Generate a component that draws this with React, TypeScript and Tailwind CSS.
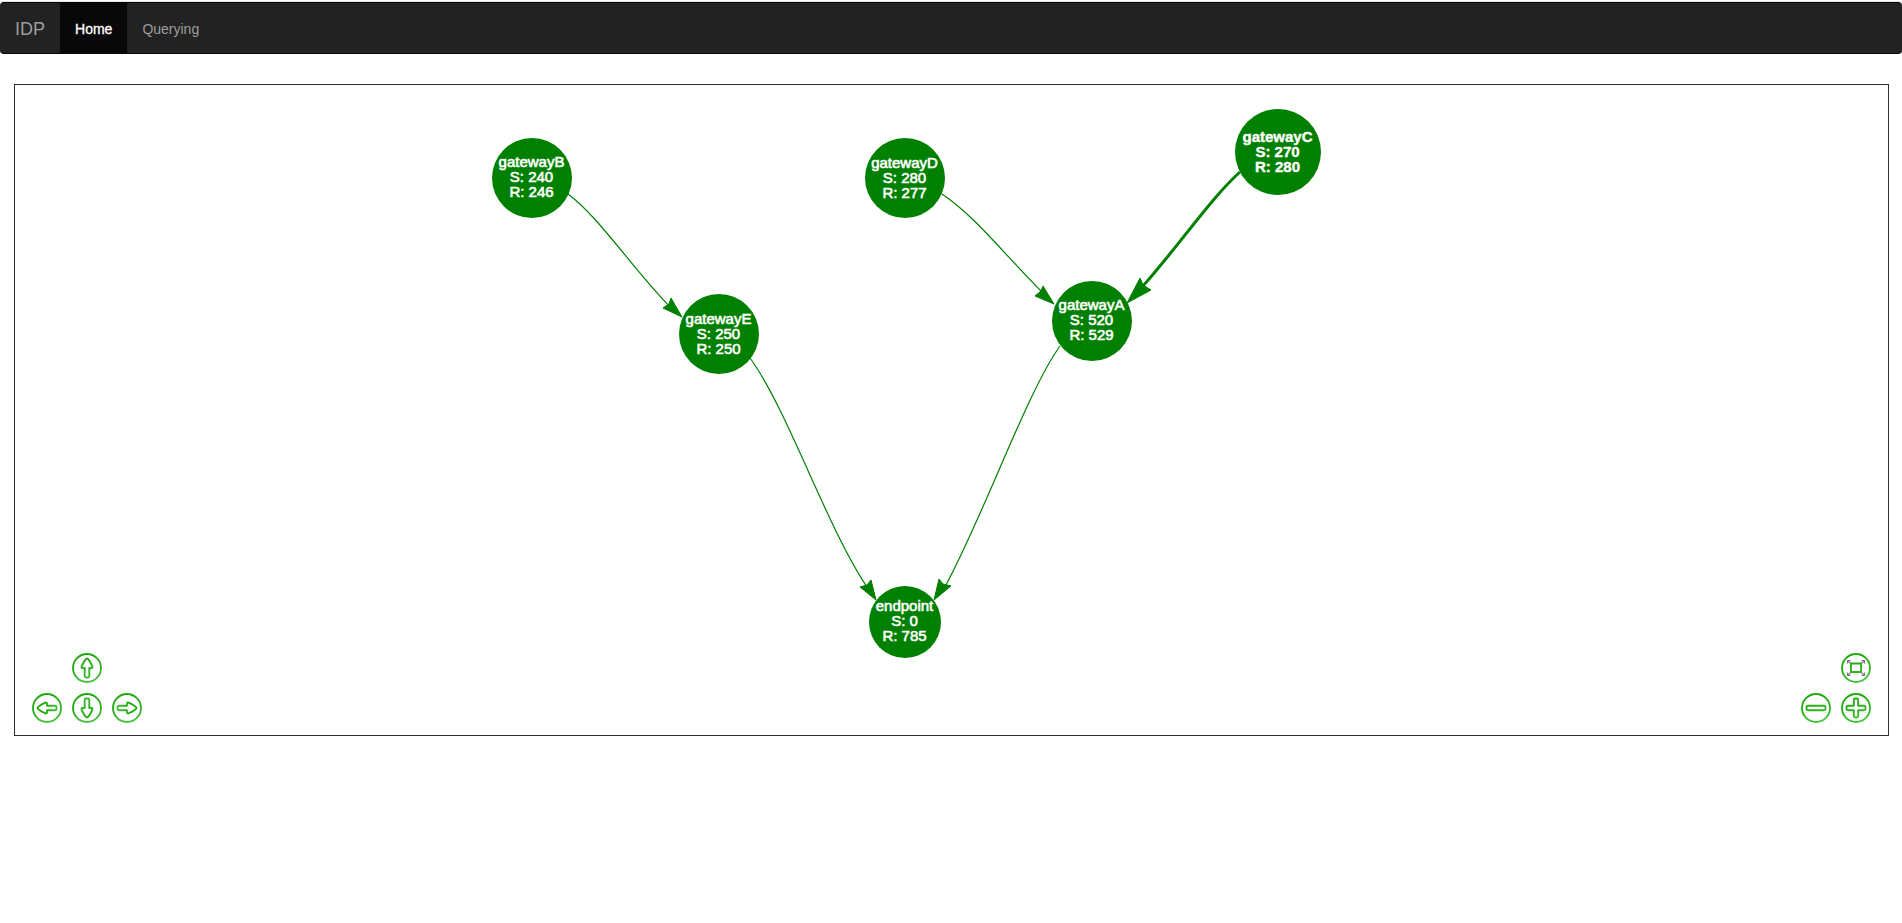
import React from "react";

type GraphNode = { id: string; sent: number; received: number; x: number; y: number; r: number; labelY: number; selected?: boolean };
type Edge = { id: string; d: string; head: string; width: number };

// Coordinates are relative to the centre line of the canvas.
const nodes: GraphNode[] = [
  { id: "gatewayB", sent: 240, received: 246, x: -420, y: 93, r: 40, labelY: 69 },
  { id: "gatewayD", sent: 280, received: 277, x: -47, y: 93, r: 40, labelY: 70 },
  { id: "gatewayC", sent: 270, received: 280, x: 326, y: 67, r: 43, labelY: 44, selected: true },
  { id: "gatewayE", sent: 250, received: 250, x: -233, y: 249, r: 40, labelY: 226 },
  { id: "gatewayA", sent: 520, received: 529, x: 140, y: 236, r: 40, labelY: 212 },
  { id: "endpoint", sent: 0, received: 785, x: -47, y: 537, r: 36, labelY: 513 },
];

const edges: Edge[] = [
  { id: "B-E", width: 1.2, d: "M-384 109 C-352 133 -321 182 -280 224", head: "M-270 232 L-281 213 L-283 219 L-289 223 Z" },
  { id: "D-A", width: 1.2, d: "M-10 109 C24 132 49 166 92 209", head: "M102 219 L91 201 L89 206 L83 211 Z" },
  { id: "C-A", width: 3, d: "M288 87 C259 113 229 158 191 201", head: "M175 218 L188 193 L191 200 L199 205 Z" },
  { id: "E-end", width: 1.2, d: "M-202 273 C-164 325 -124 446 -83 505", head: "M-76 515 L-81 495 L-85 500 L-92 502 Z" },
  { id: "A-end", width: 1.2, d: "M108 261 C75 307 34 425 -6 500", head: "M-18 515 L-13 494 L-9 499 L-1 501 Z" },
];

const arrow = "M15 5.5 C16.5 5.5 20 12 20.5 14 C20.6 15 19.6 15.3 17.3 15 L17.3 23 Q17.3 24.5 15.8 24.5 L14.2 24.5 Q12.7 24.5 12.7 23 L12.7 15 C10.4 15.3 9.4 15 9.5 14 C10 12 13.5 5.5 15 5.5 Z";

function ControlButton({ label, id, children }: { label: string; id: string; children: React.ReactNode }) {
  return (
    <button type="button" aria-label={label} className="size-[30px] cursor-pointer">
      <svg viewBox="0 0 30 30" className="size-full" fill="none" strokeWidth="1.9" strokeLinejoin="round">
        <defs>
          <linearGradient id={id} gradientUnits="userSpaceOnUse" x1="8" y1="0" x2="20" y2="30">
            <stop offset="0" stopColor="#1ea60c" />
            <stop offset="0.5" stopColor="#2bb01c" />
            <stop offset="1" stopColor="#4fc544" />
          </linearGradient>
        </defs>
        <g stroke={`url(#${id})`}>
          <circle cx="15" cy="15" r="14" />
          {children}
        </g>
      </svg>
    </button>
  );
}

export default function App() {
  return (
    <div className="bg-white pt-px font-['Liberation_Sans',Arial,sans-serif]">
      <div className="border-t border-[#dfe6e9]">
        <nav className="flex h-[52px] items-stretch rounded border-y border-[#080808] bg-[#222222] text-sm text-[#9d9d9d]">
          <a href="#" className="flex items-center px-[15px] pt-0.5 text-lg leading-5">IDP</a>
          <a href="#home" aria-current="page" className="flex items-center bg-[#080808] px-[15px] pt-0.5 text-white [-webkit-text-stroke:0.3px_white]">Home</a>
          <a href="#querying" className="flex items-center px-[15px] pt-0.5">Querying</a>
        </nav>
      </div>

      <main className="relative mt-[30px] mr-[13px] ml-3.5 h-[652px] overflow-hidden border border-[#2d2d2d]">
        <div className="absolute top-0 left-1/2">
          <svg className="absolute overflow-visible" width="1" height="1" fill="none" stroke="#008000">
            {edges.map((e) => (
              <g key={e.id}>
                <path d={e.d} strokeWidth={e.width} />
                <path d={e.head} fill="#008000" />
              </g>
            ))}
            {nodes.map((n) => (
              <circle key={n.id} cx={n.x} cy={n.y} r={n.r} fill="#008000" stroke="none" />
            ))}
          </svg>
          {nodes.map((n) => (
            <div
              key={n.id}
              className={`absolute w-24 -translate-x-1/2 text-center text-[15px] leading-[15px] text-white ${n.selected ? "font-bold [-webkit-text-stroke:0.4px_white]" : "[-webkit-text-stroke:0.6px_white]"}`}
              style={{ left: n.x, top: n.labelY }}
            >
              <div>{n.id}</div>
              <div>S: {n.sent}</div>
              <div>R: {n.received}</div>
            </div>
          ))}
        </div>

        <div className="absolute bottom-3 left-[17px] grid grid-cols-3 gap-2.5">
          <div className="col-start-2 h-[30px]"><ControlButton label="Move up" id="up"><path d={arrow} /></ControlButton></div>
          <div className="col-start-1 h-[30px]"><ControlButton label="Move left" id="left"><path d={arrow} transform="rotate(-90 15 15)" /></ControlButton></div>
          <div className="h-[30px]"><ControlButton label="Move down" id="down"><path d={arrow} transform="rotate(180 15 15)" /></ControlButton></div>
          <div className="h-[30px]"><ControlButton label="Move right" id="right"><path d={arrow} transform="rotate(90 15 15)" /></ControlButton></div>
        </div>

        <div className="absolute right-[17px] bottom-3 grid grid-cols-2 gap-2.5">
          <div className="col-start-2 h-[30px]">
            <ControlButton label="Fit" id="fit">
              <rect x="10" y="10.5" width="10" height="8.5" />
              <path stroke="#777777" strokeWidth="1.1" strokeLinejoin="miter" d="M6.5 10.5V7.5H9.5M6.5 7.5L9.5 10.5M20.5 7.5H23.5V10.5M23.5 7.5L20.5 10.5M6.5 19.5V22.5H9.5M6.5 22.5L9.5 19.5M20.5 22.5H23.5V19.5M23.5 22.5L20.5 19.5" />
            </ControlButton>
          </div>
          <div className="col-start-1 h-[30px]"><ControlButton label="Zoom out" id="out"><rect x="5.5" y="12.8" width="19" height="4.4" rx="1.5" /></ControlButton></div>
          <div className="h-[30px]">
            <ControlButton label="Zoom in" id="in">
              <path d="M12.8 7 Q12.8 5.5 14.3 5.5 H15.7 Q17.2 5.5 17.2 7 V12.8 H23 Q24.5 12.8 24.5 14.3 V15.7 Q24.5 17.2 23 17.2 H17.2 V23 Q17.2 24.5 15.7 24.5 H14.3 Q12.8 24.5 12.8 23 V17.2 H7 Q5.5 17.2 5.5 15.7 V14.3 Q5.5 12.8 7 12.8 H12.8 Z" />
            </ControlButton>
          </div>
        </div>
      </main>
    </div>
  );
}
